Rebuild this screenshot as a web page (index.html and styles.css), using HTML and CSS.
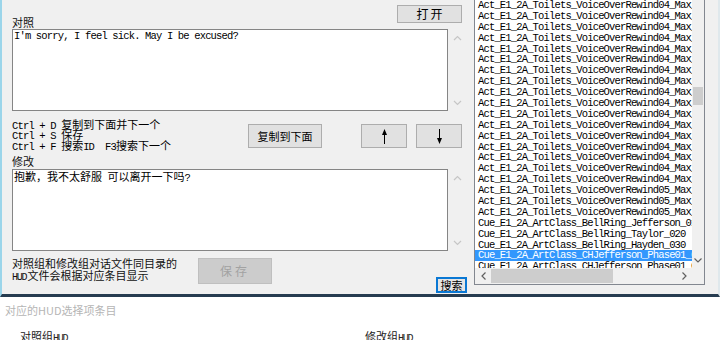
FILE: index.html
```html
<!DOCTYPE html>
<html lang="zh-CN">
<head>
    <meta charset="UTF-8">
    <title>对照编辑</title>
    <link rel="stylesheet" href="styles.css">
</head>
<body>
    <div class="window">
        <div class="left">
            <div class="head">
                <span class="label">对照</span>
                <button class="btn btn-open">打开</button>
            </div>
            <div class="edit-row">
                <div class="edit-box mono">I'm sorry, I feel sick. May I be excused?</div>
                <div class="edit-scroll">
                    <svg width="9" height="6" viewBox="0 0 9 6"><polyline points="1,5 4.5,1.5 8,5" fill="none" stroke="#c6c6c6" stroke-width="1.2"/></svg>
                    <svg width="9" height="6" viewBox="0 0 9 6"><polyline points="1,1 4.5,4.5 8,1" fill="none" stroke="#c6c6c6" stroke-width="1.2"/></svg>
                </div>
            </div>
            <div class="mid">
                <div class="keys mono">
                    <div>Ctrl + D <span class="cn">复制到下面并下一个</span></div>
                    <div>Ctrl + S <span class="cn">保存</span></div>
                    <div>Ctrl + F <span class="cn">搜索</span>ID  F3<span class="cn">搜索下一个</span></div>
                </div>
                <button class="btn btn-copy">复制到下面</button>
                <button class="btn btn-arrow btn-up">
                    <svg width="9" height="15" viewBox="0 0 9 15"><polygon points="4.5,0 2,6 7,6" fill="#000"/><line x1="4.5" y1="5" x2="4.5" y2="15" stroke="#000" stroke-width="1"/></svg>
                </button>
                <button class="btn btn-arrow btn-down">
                    <svg width="9" height="15" viewBox="0 0 9 15"><polygon points="4.5,15 2,9 7,9" fill="#000"/><line x1="4.5" y1="0" x2="4.5" y2="10" stroke="#000" stroke-width="1"/></svg>
                </button>
            </div>
            <div class="label-row">修改</div>
            <div class="edit-row">
                <div class="edit-box mono"><span class="cn">抱歉，我不太舒服</span> <span class="cn">可以离开一下吗</span>?</div>
                <div class="edit-scroll">
                    <svg width="9" height="6" viewBox="0 0 9 6"><polyline points="1,5 4.5,1.5 8,5" fill="none" stroke="#c6c6c6" stroke-width="1.2"/></svg>
                    <svg width="9" height="6" viewBox="0 0 9 6"><polyline points="1,1 4.5,4.5 8,1" fill="none" stroke="#c6c6c6" stroke-width="1.2"/></svg>
                </div>
            </div>
            <div class="foot">
                <div class="note">
                    <div>对照组和修改组对话文件同目录的</div>
                    <div><span class="asc">HUD</span>文件会根据对应条目显示</div>
                </div>
                <button class="btn btn-save" disabled>保存</button>
                <button class="btn btn-search">搜索</button>
            </div>
        </div>

        <div class="list mono">
            <div class="items">
                <div class="item">Act_E1_2A_Toilets_VoiceOverRewind04_Max_01</div>
                <div class="item">Act_E1_2A_Toilets_VoiceOverRewind04_Max_02</div>
                <div class="item">Act_E1_2A_Toilets_VoiceOverRewind04_Max_03</div>
                <div class="item">Act_E1_2A_Toilets_VoiceOverRewind04_Max_04</div>
                <div class="item">Act_E1_2A_Toilets_VoiceOverRewind04_Max_05</div>
                <div class="item">Act_E1_2A_Toilets_VoiceOverRewind04_Max_06</div>
                <div class="item">Act_E1_2A_Toilets_VoiceOverRewind04_Max_07</div>
                <div class="item">Act_E1_2A_Toilets_VoiceOverRewind04_Max_08</div>
                <div class="item">Act_E1_2A_Toilets_VoiceOverRewind04_Max_09</div>
                <div class="item">Act_E1_2A_Toilets_VoiceOverRewind04_Max_10</div>
                <div class="item">Act_E1_2A_Toilets_VoiceOverRewind04_Max_11</div>
                <div class="item">Act_E1_2A_Toilets_VoiceOverRewind04_Max_12</div>
                <div class="item">Act_E1_2A_Toilets_VoiceOverRewind04_Max_13</div>
                <div class="item">Act_E1_2A_Toilets_VoiceOverRewind04_Max_14</div>
                <div class="item">Act_E1_2A_Toilets_VoiceOverRewind04_Max_15</div>
                <div class="item">Act_E1_2A_Toilets_VoiceOverRewind04_Max_16</div>
                <div class="item">Act_E1_2A_Toilets_VoiceOverRewind04_Max_17</div>
                <div class="item">Act_E1_2A_Toilets_VoiceOverRewind05_Max_01</div>
                <div class="item">Act_E1_2A_Toilets_VoiceOverRewind05_Max_02</div>
                <div class="item">Act_E1_2A_Toilets_VoiceOverRewind05_Max_03</div>
                <div class="item">Cue_E1_2A_ArtClass_BellRing_Jefferson_010</div>
                <div class="item">Cue_E1_2A_ArtClass_BellRing_Taylor_020</div>
                <div class="item">Cue_E1_2A_ArtClass_BellRing_Hayden_030</div>
                <div class="item sel">Cue_E1_2A_ArtClass_CHJefferson_Phase01_010</div>
                <div class="item">Cue_E1_2A_ArtClass_CHJefferson_Phase01_020</div>
            </div>
            <div class="vscroll">
                <div class="thumb-v"></div>
                <div class="arrow-box">
                    <svg width="8" height="5" viewBox="0 0 8 5"><polyline points="0.5,0.5 4,4 7.5,0.5" fill="none" stroke="#606060" stroke-width="1.2"/></svg>
                </div>
            </div>
            <div class="hscroll">
                <div class="arrow-box-h">
                    <svg width="5" height="8" viewBox="0 0 5 8"><polyline points="4.5,0.5 1,4 4.5,7.5" fill="none" stroke="#606060" stroke-width="1.2"/></svg>
                </div>
                <div class="thumb-h"></div>
                <div class="arrow-box-h push">
                    <svg width="5" height="8" viewBox="0 0 5 8"><polyline points="0.5,0.5 4,4 0.5,7.5" fill="none" stroke="#606060" stroke-width="1.2"/></svg>
                </div>
            </div>
            <div class="corner"></div>
        </div>
    </div>

    <div class="hud">
        <div class="hud-title">对应的HUD选择项条目</div>
        <div class="hud-cols">
            <div class="hud-col first">对照组<span class="asc">HUD</span></div>
            <div class="hud-col">修改组<span class="asc">HUD</span></div>
        </div>
    </div>
</body>
</html>
```

FILE: styles.css
```css
* {
    box-sizing: border-box;
}
body {
    margin: 0;
    width: 720px;
    height: 340px;
    overflow: hidden;
    background: #fff;
    font-family: "Noto Sans CJK SC", "Liberation Sans", sans-serif;
    font-size: 11px;
    color: #000;
}
.mono {
    font-family: "Liberation Mono", "Noto Sans CJK SC", monospace;
    font-size: 10.5px;
    letter-spacing: -0.84px;
}
.cn {
    font-family: "Noto Sans CJK SC", sans-serif;
    font-size: 11px;
    letter-spacing: 0;
}
.asc {
    font-family: "Liberation Mono", monospace;
    font-size: 10px;
    letter-spacing: -1.2px;
    margin-right: 1px;
}

/* main dialog */
.window {
    display: flex;
    height: 297px;
    background: #f0f0f0;
    border-left: 2px solid #9bd5ea;
    border-right: 2px solid #dfe8ec;
    border-bottom: 3px solid #263c50;
}
.left {
    flex: none;
    width: 472px;
    padding: 5px 0 0 10px;
}
.head {
    display: flex;
    justify-content: space-between;
    width: 450px;
    height: 24px;
}
.label {
    align-self: flex-end;
    line-height: 13px;
    color: #111;
}
.label-row {
    height: 14px;
    line-height: 13px;
    color: #111;
}

.btn {
    display: flex;
    align-items: center;
    justify-content: center;
    padding: 0;
    background: #e1e1e1;
    border: 1px solid #adadad;
    font-family: "Noto Sans CJK SC", sans-serif;
    font-size: 11px;
    line-height: 12px;
    color: #000;
}
.btn-open {
    width: 65px;
    height: 18px;
    font-size: 12px;
    letter-spacing: 2px;
    padding-left: 2px;
}
.btn-copy {
    width: 74px;
    height: 24px;
    margin-top: 13px;
}
.btn-arrow {
    width: 46px;
    height: 24px;
    margin-top: 13px;
}
.btn-up {
    margin-left: 39px;
}
.btn-down {
    margin-left: 9px;
}
.btn-save {
    width: 74px;
    height: 26px;
    margin-top: 7px;
    background: #cccccc;
    border-color: #bfbfbf;
    color: #a2a2a2;
    font-size: 12px;
    letter-spacing: 3px;
}
.btn-search {
    width: 31px;
    height: 16px;
    margin-top: 26px;
    margin-left: 164px;
    border: 2px solid #0a78d4;
    background: #e5e5e5;
}

/* text boxes */
.edit-row {
    display: flex;
    height: 82px;
}
.edit-box {
    width: 436px;
    height: 82px;
    padding: 0 1px;
    background: #fff;
    border: 1px solid #858585;
    line-height: 12px;
    white-space: pre;
    overflow: hidden;
}
.edit-scroll {
    display: flex;
    flex-direction: column;
    justify-content: space-between;
    align-items: center;
    width: 18px;
    padding: 6px 0 5px;
}

.mid {
    display: flex;
    align-items: flex-start;
    height: 44px;
}
.keys {
    width: 236px;
    padding-top: 8px;
}
.keys div {
    height: 10.3px;
    line-height: 10.3px;
    white-space: pre;
}

.foot {
    display: flex;
    align-items: flex-start;
    height: 43px;
}
.note {
    width: 186px;
    padding-top: 6px;
    color: #111;
}
.note div {
    height: 12px;
    line-height: 12px;
    white-space: nowrap;
}

/* list box */
.list {
    flex: none;
    display: grid;
    grid-template-columns: 217px 12px;
    grid-template-rows: 268px 16px;
    width: 231px;
    height: 285px;
    background: #fff;
    border: 1px solid #828790;
    border-top: 0;
}
.items {
    overflow: hidden;
}
.item {
    height: 10.9px;
    line-height: 10.9px;
    padding-left: 3px;
    white-space: nowrap;
}
.item.sel {
    background: #3297fd;
    color: #fff;
}
.vscroll {
    display: flex;
    flex-direction: column;
    align-items: center;
    background: #f0f0f0;
}
.thumb-v {
    width: 10px;
    height: 18px;
    margin-top: 87px;
    background: #cdcdcd;
}
.arrow-box {
    display: flex;
    align-items: center;
    justify-content: center;
    width: 12px;
    height: 16px;
    margin-top: auto;
}
.hscroll {
    display: flex;
    align-items: center;
    background: #f0f0f0;
}
.arrow-box-h {
    display: flex;
    align-items: center;
    justify-content: center;
    width: 16px;
    height: 16px;
}
.arrow-box-h.push {
    margin-left: auto;
}
.thumb-h {
    width: 122px;
    height: 14px;
    background: #cdcdcd;
}
.corner {
    background: #f0f0f0;
}

/* lower panel */
.hud {
    height: 43px;
    background: #fff;
}
.hud-title {
    height: 20px;
    padding: 7px 0 0 5px;
    line-height: 13px;
    color: #b5b5b5;
}
.hud-cols {
    display: flex;
    margin-top: 13px;
    line-height: 12px;
    color: #222;
}
.hud-col.first {
    width: 365px;
    padding-left: 20px;
}
```
